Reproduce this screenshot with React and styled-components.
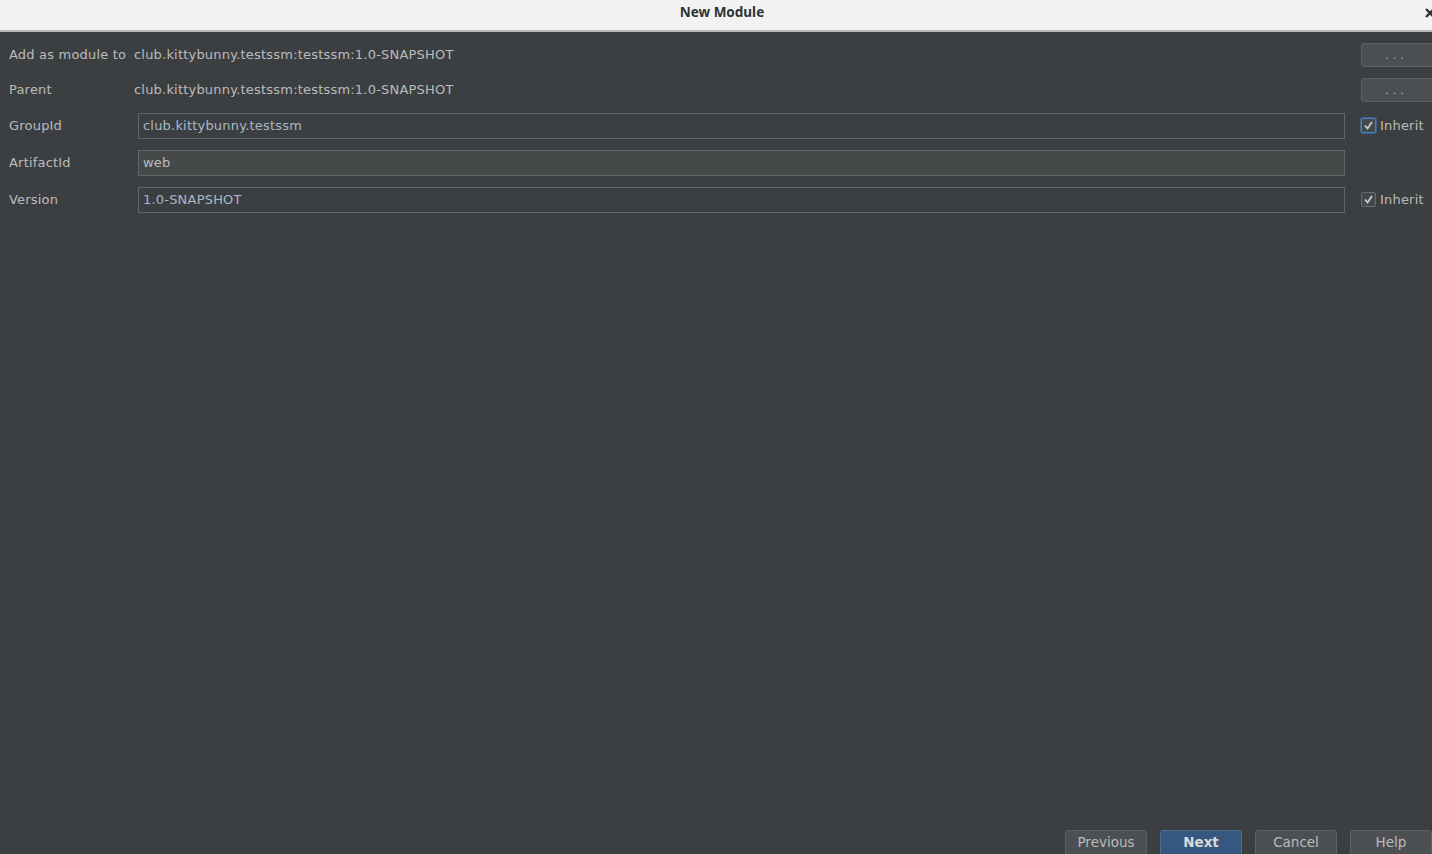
import React from 'react';
import styled, { createGlobalStyle } from 'styled-components';

const GlobalStyle = createGlobalStyle`
  html, body {
    margin: 0;
    padding: 0;
    background: #3c3f41;
  }
  * {
    box-sizing: border-box;
  }
`;

const Window = styled.div`
  width: 1432px;
  height: 854px;
  overflow: hidden;
  display: flex;
  flex-direction: column;
  background: #3c3f41;
  font-family: 'DejaVu Sans', 'Liberation Sans', sans-serif;
  font-size: 13px;
  letter-spacing: 0.2px;
  color: #bbbbbb;
`;

const TitleBar = styled.div`
  position: relative;
  height: 32px;
  flex: none;
  display: flex;
  align-items: center;
  justify-content: center;
  background: #f2f2f2;
  border-bottom: 2px solid #b8b8b4;
  padding: 0 0 6px 12px;
`;

const Title = styled.div`
  font-family: 'Noto Sans', 'DejaVu Sans', sans-serif;
  font-weight: 700;
  font-size: 13.5px;
  letter-spacing: 0;
  color: #2e3436;
`;

const CloseButton = styled.div`
  position: absolute;
  right: -4px;
  top: 7px;
  width: 12px;
  height: 12px;
  display: flex;
`;

const Form = styled.div`
  display: grid;
  grid-template-columns: 125px 1fr 71px;
  grid-auto-rows: 26px;
  grid-template-rows: 24px 24px;
  row-gap: 11px;
  padding: 11px 0 0 9px;
  align-items: center;
`;

const Label = styled.div`
  white-space: nowrap;
  color: #bbbbbb;
  padding-bottom: 2px;
`;

const Value = styled.div`
  white-space: nowrap;
  color: #bbbbbb;
  padding-bottom: 2px;
`;

const Field = styled.div`
  height: 26px;
  margin: 0 16px 0 4px;
  display: flex;
  align-items: center;
  padding: 0 4px 1px;
  border: 1px solid #646464;
  background: ${(p) => (p.$disabled ? '#45494a' : '#3c3f41')};
  color: ${(p) => (p.$disabled ? '#bbbbbb' : '#a9b7c6')};
  white-space: nowrap;
`;

const BrowseButton = styled.div`
  height: 24px;
  width: 75px;
  display: flex;
  align-items: flex-end;
  justify-content: center;
  padding-bottom: 5px;
  padding-right: 4px;
  background: #4c5052;
  border: 1px solid #5e6060;
  border-radius: 3px;
  color: #bbbbbb;
  letter-spacing: 4px;
  font-size: 11px;
  line-height: 1;
`;

const CheckRow = styled.label`
  display: flex;
  align-items: center;
  gap: 4px;
  color: #bbbbbb;
  padding-bottom: 1px;
`;

const CheckBox = styled.span`
  width: 15px;
  height: 15px;
  flex: none;
  display: flex;
  align-items: center;
  justify-content: center;
  border-radius: 2px;
  background: #43494a;
  border: 1px solid ${(p) => (p.$focused ? '#4a80c0' : '#6b6b6b')};
  box-shadow: ${(p) => (p.$focused ? '0 0 0 1px #3d6185' : 'none')};
`;

const Spacer = styled.div`
  flex: 1;
`;

const Footer = styled.div`
  height: 24px;
  flex: none;
  display: flex;
  justify-content: flex-end;
  align-items: flex-start;
  gap: 13px;
`;

const DialogButton = styled.div`
  width: 82px;
  height: 26px;
  flex: none;
  display: flex;
  align-items: center;
  justify-content: center;
  padding-bottom: 2px;
  border-radius: 3px;
  font-size: 13.5px;
  letter-spacing: 0;
  font-weight: ${(p) => (p.$primary ? 700 : 400)};
  background: ${(p) => (p.$primary ? '#365880' : '#4c5052')};
  border: 1px solid ${(p) => (p.$primary ? '#4c708c' : '#5e6060')};
  color: ${(p) => (p.$primary ? '#d8d8d8' : '#bbbbbb')};
`;

const Check = () => (
  <svg width="11" height="11" viewBox="0 0 11 11">
    <path d="M2 5.5 L4.5 8.5 L9 2" fill="none" stroke="#c8c8c8" strokeWidth="1.8" />
  </svg>
);

export default function App() {
  return (
    <>
      <GlobalStyle />
      <Window>
        <TitleBar>
          <Title>New Module</Title>
          <CloseButton>
            <svg width="12" height="12" viewBox="0 0 12 12">
              <path d="M2 2 L10 10 M10 2 L2 10" stroke="#2e3436" strokeWidth="2.4" />
            </svg>
          </CloseButton>
        </TitleBar>
        <Form>
          <Label>Add as module to</Label>
          <Value>club.kittybunny.testssm:testssm:1.0-SNAPSHOT</Value>
          <BrowseButton>...</BrowseButton>

          <Label>Parent</Label>
          <Value>club.kittybunny.testssm:testssm:1.0-SNAPSHOT</Value>
          <BrowseButton>...</BrowseButton>

          <Label>GroupId</Label>
          <Field>club.kittybunny.testssm</Field>
          <CheckRow>
            <CheckBox $focused><Check /></CheckBox>
            Inherit
          </CheckRow>

          <Label>ArtifactId</Label>
          <Field $disabled>web</Field>
          <div />

          <Label>Version</Label>
          <Field>1.0-SNAPSHOT</Field>
          <CheckRow>
            <CheckBox><Check /></CheckBox>
            Inherit
          </CheckRow>
        </Form>
        <Spacer />
        <Footer>
          <DialogButton>Previous</DialogButton>
          <DialogButton $primary>Next</DialogButton>
          <DialogButton>Cancel</DialogButton>
          <DialogButton>Help</DialogButton>
        </Footer>
      </Window>
    </>
  );
}
